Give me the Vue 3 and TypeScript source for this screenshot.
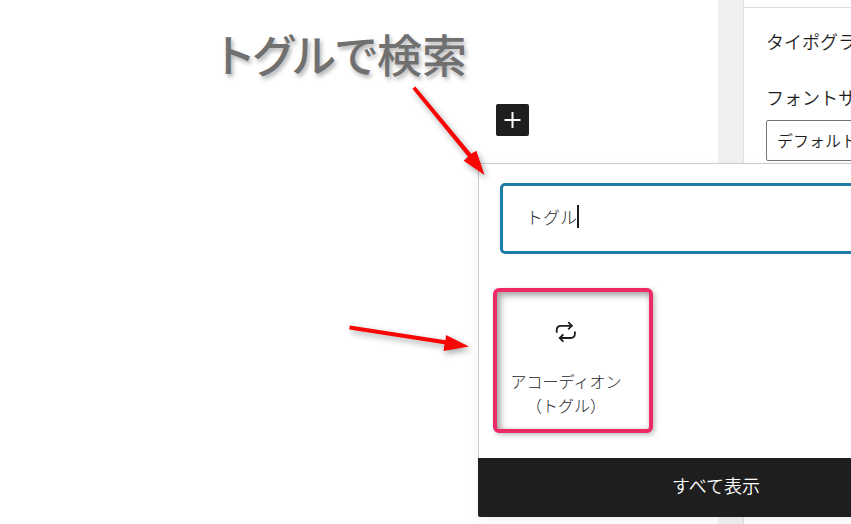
<script setup lang="ts">
import { ref } from 'vue'

interface BlockItem {
  id: string
  lines: string[]
}

const query = ref<string>('トグル')
const fontSize = ref<string>('default')
const blocks: BlockItem[] = [
  { id: 'accordion', lines: ['アコーディオン', '（トグル）'] },
]
</script>

<template>
  <div class="editor">
    <main class="canvas">
      <h1 class="note">トグルで検索</h1>
      <button class="appender" type="button" aria-label="ブロックを追加">
        <svg viewBox="0 0 32 32" width="33" height="32" aria-hidden="true">
          <path d="M16 8v16M8 16h16" fill="none" stroke="#fff" stroke-width="2" />
        </svg>
      </button>
    </main>

    <div class="gutter"></div>

    <aside class="sidebar">
      <div class="panel">
        <h2 class="panel-title">タイポグラフィ</h2>
        <label class="field-label" for="font-size">フォントサイズ</label>
        <select id="font-size" v-model="fontSize" class="select">
          <option value="default">デフォルト</option>
        </select>
      </div>
    </aside>

    <section class="inserter">
      <div class="inserter-body">
        <label class="search">
          <input v-model="query" class="search-input" type="text" aria-label="検索" />
          <span class="caret"></span>
        </label>
        <div class="results">
          <button v-for="block in blocks" :key="block.id" class="block" type="button">
            <svg class="block-icon" viewBox="0 0 28 28" width="28" height="28" aria-hidden="true">
              <path
                d="M4.700 14.700V12.200C4.700 9.200 6 7.800 9 7.800H19.500M16.200 4.200 19.900 7.800 16.200 11.400M22.900 13.500V15.600C22.900 18.600 21.600 20 18.600 20H8M11.400 16.400 7.700 20 11.400 23.600"
                fill="none"
                stroke="#1e1e1e"
                stroke-width="1.8"
              />
            </svg>
            <span v-for="line in block.lines" :key="line" class="block-line">{{ line }}</span>
          </button>
        </div>
      </div>
      <button class="show-all" type="button">すべて表示</button>
    </section>

    <svg class="arrows" viewBox="0 0 851 524" width="851" height="524" aria-hidden="true">
      <g fill="#f80505">
        <path d="M412.400 88.800 415.400 86.400 471.300 153.800 476.300 150.800 484.500 175 463.700 160.800 468 156.800Z" />
        <path d="M349.800 325.500 445.500 340.200 446 335 469 346.500 443.500 351 444.500 344.300 349.300 329.600Z" />
      </g>
    </svg>
  </div>
</template>

<style>
body {
  margin: 0;
  background: #fff;
}
</style>

<style scoped>
.editor {
  position: relative;
  display: grid;
  grid-template-columns: minmax(0, 1fr) 25px 108px;
  min-height: 100vh;
  overflow: hidden;
  background: #fff;
  color: #1e1e1e;
  font-family: "Noto Sans CJK JP", sans-serif;
  font-weight: 350;
}

.editor *,
.editor *::before {
  box-sizing: border-box;
}

button,
input,
select {
  margin: 0;
  border: 0;
  padding: 0;
  color: inherit;
  font: inherit;
}

.canvas {
  display: flex;
  flex-direction: column;
  align-items: flex-start;
  padding: 22px 0 0 218px;
}

.note {
  margin: 0;
  color: #707070;
  font-size: 45px;
  font-weight: 500;
  font-feature-settings: "palt";
  line-height: 64px;
  text-shadow: 2px 3px 4px rgba(0, 0, 0, 0.3);
  white-space: nowrap;
}

.appender {
  display: flex;
  margin: 18px 0 0 278px;
  border-radius: 2px;
  background: #1e1e1e;
}

.gutter {
  background: #f0f0f0;
}

.sidebar {
  min-width: 0;
  border-left: 1px solid #e0e0e0;
  overflow: hidden;
}

.panel {
  width: 280px;
  margin-top: 7px;
  border-top: 1px solid #ddd;
  padding: 19px 22px;
}

.panel-title {
  margin: 0 0 30px;
  font-size: 18px;
  font-weight: 350;
  line-height: 28px;
}

.field-label {
  display: block;
  margin-bottom: 11px;
  font-size: 18px;
  line-height: 24px;
}

.select {
  appearance: none;
  width: 100%;
  height: 41px;
  border: 1px solid #757575;
  border-radius: 2px;
  padding: 0 10px 2px;
  background: #fff;
  font-size: 16px;
}

.inserter {
  position: absolute;
  top: 163px;
  left: 478px;
  width: 476px;
  border-radius: 2px;
  background: #fff;
  box-shadow: 0 3px 10px rgba(0, 0, 0, 0.06);
}

.inserter-body {
  border: 1px solid #ccc;
  border-bottom: 0;
  padding: 19px 21px 25px;
}

.search {
  display: flex;
  align-items: center;
  height: 71px;
  border: 3px solid #1f7ca6;
  border-radius: 5px;
  padding: 0 23px 4px;
}

.search-input {
  field-sizing: content;
  outline: 0;
  background: transparent;
  font-size: 17px;
  font-weight: 300;
  line-height: 28px;
}

.caret {
  width: 2px;
  height: 23px;
  background: #1e1e1e;
}

.results {
  display: flex;
  margin: 34px -7px 0;
}

.block {
  display: flex;
  flex-direction: column;
  align-items: center;
  width: 160px;
  height: 145px;
  border: 4px solid #ee2a66;
  border-radius: 6px;
  padding: 26px 14px 0 0;
  background: #fff;
  box-shadow:
    2px 2px 5px rgba(0, 0, 0, 0.25),
    inset 4px 4px 6px rgba(0, 0, 0, 0.3),
    inset 0 0 5px rgba(0, 0, 0, 0.15);
}

.block-icon {
  margin-bottom: 23px;
}

.block-line {
  font-size: 16px;
  font-weight: 300;
  line-height: 24px;
  white-space: nowrap;
}

.show-all {
  display: block;
  width: 100%;
  height: 59px;
  border-radius: 0 0 2px 2px;
  padding-bottom: 6px;
  background: #1e1e1e;
  color: #fff;
  font-size: 18px;
}

.arrows {
  position: absolute;
  top: 0;
  left: 0;
  filter: drop-shadow(2px 3px 3px rgba(0, 0, 0, 0.35));
  pointer-events: none;
}
</style>
